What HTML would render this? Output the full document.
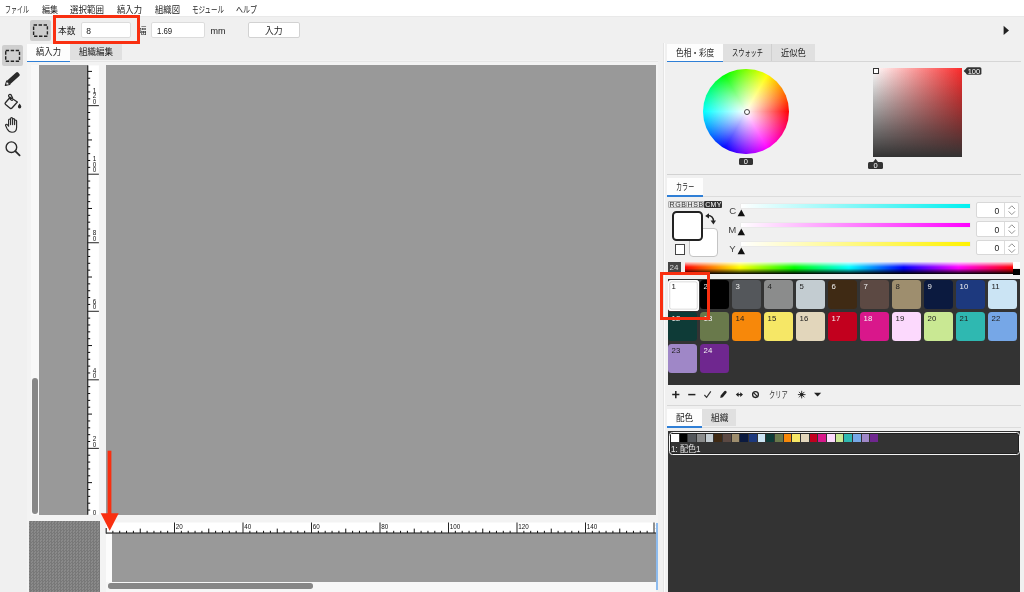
<!DOCTYPE html>
<html lang="ja"><head><meta charset="utf-8"><title>縞入力</title>
<style>
*{box-sizing:border-box;margin:0;padding:0}
html,body{width:1024px;height:592px;overflow:hidden}
body{position:relative;background:#f0f0f0;will-change:transform;font-family:"Liberation Sans","Noto Sans CJK JP",sans-serif;font-size:9px;color:#222;line-height:1}
.a{position:absolute}
.t{position:absolute;white-space:nowrap;line-height:1}
.menu{position:absolute;left:0;top:0;width:1024px;height:16px;background:#fff}
.menu .t{top:4.6px;font-size:8.6px;color:#1e1e1e}
.kana{letter-spacing:-2.5px}
.tab{position:absolute;font-size:8.6px;text-align:center;color:#222}
.tab.on{background:#fdfdfd}
.tab.off{background:#e0e0e0}
.inp{position:absolute;background:#fff;border:1px solid #dcdcdc;border-radius:2px}
.badge{position:absolute;background:#333;color:#fff;border-radius:1.5px;font-size:7.5px;text-align:center}
.sw{position:absolute;width:29.1px;height:29.1px;border-radius:3.5px}
.sw span{position:absolute;left:3.4px;top:2.6px;font-size:7.8px;line-height:1}
.ms{position:absolute;top:434.4px;width:7.7px;height:7.8px}
.hl{position:absolute;height:1px;background:#d6d6d6}
</style></head><body>

<div class="menu">
<span class="t" style="left:5px;top:5.5px;font-size:9px;transform-origin:0 0;transform:scaleX(0.666);color:#1e1e1e;">ファイル</span>
<span class="t" style="left:42px;top:5.5px;font-size:9px;transform-origin:0 0;transform:scaleX(0.888);color:#1e1e1e;">編集</span>
<span class="t" style="left:70px;top:5.5px;font-size:9px;transform-origin:0 0;transform:scaleX(0.944);color:#1e1e1e;">選択範囲</span>
<span class="t" style="left:117px;top:5.5px;font-size:9px;transform-origin:0 0;transform:scaleX(0.925);color:#1e1e1e;">縞入力</span>
<span class="t" style="left:155px;top:5.5px;font-size:9px;transform-origin:0 0;transform:scaleX(0.925);color:#1e1e1e;">組織図</span>
<span class="t" style="left:192px;top:5.5px;font-size:9px;transform-origin:0 0;transform:scaleX(0.721);color:#1e1e1e;">モジュール</span>
<span class="t" style="left:236px;top:5.5px;font-size:9px;transform-origin:0 0;transform:scaleX(0.777);color:#1e1e1e;">ヘルプ</span>
</div>
<div class="a" style="left:0;top:16px;width:1024px;height:1px;background:#e9e9e9"></div>
<div class="a" style="left:30px;top:20px;width:20.6px;height:20.6px;background:#cdcdcd;border-radius:2px"></div>
<svg class="a" style="left:30px;top:20px" width="21" height="21" viewBox="0 0 21 21"><rect x="3.6" y="5" width="13.8" height="11.2" fill="none" stroke="#222" stroke-width="1.4" stroke-dasharray="3.4 1.6"/></svg>
<span class="t" style="left:58px;top:26.9px;font-size:9px;transform-origin:0 0;transform:scaleX(0.966);">本数</span>
<div class="inp" style="left:80.8px;top:22.3px;width:50px;height:15.9px"></div>
<span class="t" style="left:86.3px;top:27px;font-size:8.5px">8</span>
<span class="t" style="left:137.5px;top:27px;font-size:9px">幅</span>
<div class="inp" style="left:151px;top:22.3px;width:53.6px;height:15.9px"></div>
<span class="t" style="left:157px;top:27px;font-size:8.6px;transform-origin:0 0;transform:scaleX(0.908);">1.69</span>
<span class="t" style="left:210.6px;top:27px;font-size:9px;transform-origin:0 0;transform:scaleX(1.000);">mm</span>
<div class="inp" style="left:247.8px;top:22.3px;width:51.8px;height:15.9px;border-color:#d2d2d2"></div>
<span class="t" style="left:248px;top:27px;width:51.4px;text-align:center;font-size:8.8px">入力</span>
<svg class="a" style="left:1003px;top:25px" width="8" height="11" viewBox="0 0 8 11"><path d="M0.6 0.8 L6 5.4 L0.6 10 Z" fill="#222"/></svg>
<div class="a" style="left:53px;top:15px;width:86.5px;height:28.8px;border:3.8px solid #f92f10;z-index:5"></div>
<div class="a" style="left:1.6px;top:45px;width:21.2px;height:21px;background:#cfcfcf;border-radius:2px"></div>
<svg class="a" style="left:0;top:44px" width="27" height="120" viewBox="0 44 27 120">
<rect x="5.7" y="50.5" width="13.8" height="10.8" fill="none" stroke="#222" stroke-width="1.4" stroke-dasharray="3.4 1.6"/>
<g transform="translate(12.5 78.9) rotate(-42) scale(0.92)"><path d="M-6.2 -2.6 H7.6 a1.6 1.6 0 0 1 1.6 1.6 V1 a1.6 1.6 0 0 1 -1.6 1.6 H-6.2 Z" fill="#2a2a2a"/><path d="M-6.2 -2.6 L-10.6 0 L-6.2 2.6 Z" fill="#f0f0f0" stroke="#2a2a2a" stroke-width="1.1" stroke-linejoin="round"/><path d="M-10.6 0 L-8.9 -1 L-8.9 1 Z" fill="#2a2a2a"/></g>
<g fill="none" stroke="#2a2a2a" stroke-width="1.3" stroke-linejoin="round" stroke-linecap="round"><path d="M10.2 97.2 L17.4 102 L12 108 a1.4 1.4 0 0 1 -1.9 0.2 L5.6 104.6 a1.4 1.4 0 0 1 -0.2 -1.9 Z"/><path d="M10.6 99.6 L8.6 96 a1.4 1.4 0 0 1 2.4 -1.2 L12.6 98"/></g>
<circle cx="12" cy="100.2" r="0.9" fill="#2a2a2a"/>
<path d="M19.6 103.6 c1 1.4 1.7 2.3 1.7 3.2 a1.7 1.7 0 0 1 -3.4 0 c0 -0.9 0.7 -1.8 1.7 -3.2 Z" fill="#2a2a2a"/>
<path d="M8.6 125.5 V120 a1 1 0 0 1 2 0 V118.6 a1 1 0 0 1 2 0 V119.6 a1 1 0 0 1 2 0 V121 a1 1 0 0 1 2 0 V127.4 c0 3 -1.8 4.8 -4.6 4.8 c-2.4 0 -3.6 -1 -4.8 -3.2 L5.6 125.6 a1 1 0 0 1 1.6 -1.1 L8.6 126.2 M10.6 120 V124.6 M12.6 119 V124.6 M14.6 120 V124.6" fill="none" stroke="#2a2a2a" stroke-width="1.15" stroke-linejoin="round" stroke-linecap="round"/>
<circle cx="11.4" cy="147.2" r="5.3" fill="none" stroke="#2a2a2a" stroke-width="1.4"/><path d="M15.3 151.2 L19.6 155.4" stroke="#2a2a2a" stroke-width="1.8" stroke-linecap="round"/>
</svg>
<div class="a" style="left:26.5px;top:44.3px;width:632px;height:548px;background:#f3f3f3"></div>
<div class="tab on" style="left:26.5px;top:44.3px;width:43.5px;height:16.4px"></div>
<span class="t" style="left:35.7px;top:48.3px;font-size:9px;transform-origin:0 0;transform:scaleX(0.925);">縞入力</span>
<div class="tab off" style="left:70px;top:44.3px;width:51.5px;height:16.2px"></div>
<span class="t" style="left:79.2px;top:48.3px;font-size:9px;transform-origin:0 0;transform:scaleX(0.944);">組織編集</span>
<div class="a" style="left:121.5px;top:44.3px;width:537px;height:16.2px;background:#f0f0f0"></div>
<div class="a" style="left:70px;top:60.5px;width:588px;height:1px;background:#e6e6e6"></div>
<div class="a" style="left:26.5px;top:60.5px;width:43.5px;height:1.8px;background:#2f7fd6"></div>
<div class="a" style="left:30.5px;top:65.4px;width:8.6px;height:449.3px;background:#f8f8f8"></div>
<div class="a" style="left:32px;top:377.5px;width:6px;height:136px;background:#878787;border-radius:3px"></div>
<div class="a" style="left:39px;top:65.4px;width:48.6px;height:449.3px;background:#999"></div>
<svg class="a" style="left:87px;top:65px" width="13" height="450" viewBox="87 65 13 450"><rect x="87.6" y="65.4" width="11.3" height="449.3" fill="#fff"/><rect x="87.2" y="65.4" width="1.1" height="449.3" fill="#111"/><rect x="88" y="509.55" width="2.2" height="1" fill="#111"/><rect x="88" y="502.69" width="2.2" height="1" fill="#111"/><rect x="88" y="495.84" width="2.2" height="1" fill="#111"/><rect x="88" y="488.98" width="2.2" height="1" fill="#111"/><rect x="88" y="482.13" width="4" height="1" fill="#111"/><rect x="88" y="475.28" width="2.2" height="1" fill="#111"/><rect x="88" y="468.42" width="2.2" height="1" fill="#111"/><rect x="88" y="461.57" width="2.2" height="1" fill="#111"/><rect x="88" y="454.71" width="2.2" height="1" fill="#111"/><rect x="87.6" y="447.86" width="11.3" height="1" fill="#222"/><rect x="88" y="441.01" width="2.2" height="1" fill="#111"/><rect x="88" y="434.15" width="2.2" height="1" fill="#111"/><rect x="88" y="427.30" width="2.2" height="1" fill="#111"/><rect x="88" y="420.44" width="2.2" height="1" fill="#111"/><rect x="88" y="413.59" width="4" height="1" fill="#111"/><rect x="88" y="406.74" width="2.2" height="1" fill="#111"/><rect x="88" y="399.88" width="2.2" height="1" fill="#111"/><rect x="88" y="393.03" width="2.2" height="1" fill="#111"/><rect x="88" y="386.17" width="2.2" height="1" fill="#111"/><rect x="87.6" y="379.32" width="11.3" height="1" fill="#222"/><rect x="88" y="372.47" width="2.2" height="1" fill="#111"/><rect x="88" y="365.61" width="2.2" height="1" fill="#111"/><rect x="88" y="358.76" width="2.2" height="1" fill="#111"/><rect x="88" y="351.90" width="2.2" height="1" fill="#111"/><rect x="88" y="345.05" width="4" height="1" fill="#111"/><rect x="88" y="338.20" width="2.2" height="1" fill="#111"/><rect x="88" y="331.34" width="2.2" height="1" fill="#111"/><rect x="88" y="324.49" width="2.2" height="1" fill="#111"/><rect x="88" y="317.63" width="2.2" height="1" fill="#111"/><rect x="87.6" y="310.78" width="11.3" height="1" fill="#222"/><rect x="88" y="303.93" width="2.2" height="1" fill="#111"/><rect x="88" y="297.07" width="2.2" height="1" fill="#111"/><rect x="88" y="290.22" width="2.2" height="1" fill="#111"/><rect x="88" y="283.36" width="2.2" height="1" fill="#111"/><rect x="88" y="276.51" width="4" height="1" fill="#111"/><rect x="88" y="269.66" width="2.2" height="1" fill="#111"/><rect x="88" y="262.80" width="2.2" height="1" fill="#111"/><rect x="88" y="255.95" width="2.2" height="1" fill="#111"/><rect x="88" y="249.09" width="2.2" height="1" fill="#111"/><rect x="87.6" y="242.24" width="11.3" height="1" fill="#222"/><rect x="88" y="235.39" width="2.2" height="1" fill="#111"/><rect x="88" y="228.53" width="2.2" height="1" fill="#111"/><rect x="88" y="221.68" width="2.2" height="1" fill="#111"/><rect x="88" y="214.82" width="2.2" height="1" fill="#111"/><rect x="88" y="207.97" width="4" height="1" fill="#111"/><rect x="88" y="201.12" width="2.2" height="1" fill="#111"/><rect x="88" y="194.26" width="2.2" height="1" fill="#111"/><rect x="88" y="187.41" width="2.2" height="1" fill="#111"/><rect x="88" y="180.55" width="2.2" height="1" fill="#111"/><rect x="87.6" y="173.70" width="11.3" height="1" fill="#222"/><rect x="88" y="166.85" width="2.2" height="1" fill="#111"/><rect x="88" y="159.99" width="2.2" height="1" fill="#111"/><rect x="88" y="153.14" width="2.2" height="1" fill="#111"/><rect x="88" y="146.28" width="2.2" height="1" fill="#111"/><rect x="88" y="139.43" width="4" height="1" fill="#111"/><rect x="88" y="132.58" width="2.2" height="1" fill="#111"/><rect x="88" y="125.72" width="2.2" height="1" fill="#111"/><rect x="88" y="118.87" width="2.2" height="1" fill="#111"/><rect x="88" y="112.01" width="2.2" height="1" fill="#111"/><rect x="87.6" y="105.16" width="11.3" height="1" fill="#222"/><rect x="88" y="98.31" width="2.2" height="1" fill="#111"/><rect x="88" y="91.45" width="2.2" height="1" fill="#111"/><rect x="88" y="84.60" width="2.2" height="1" fill="#111"/><rect x="88" y="77.74" width="2.2" height="1" fill="#111"/><rect x="88" y="70.89" width="4" height="1" fill="#111"/><text x="94.6" y="515.10" font-size="6.3" text-anchor="middle" fill="#111" font-family='Liberation Sans',sans-serif>0</text><text x="94.6" y="441.06" font-size="6.3" text-anchor="middle" fill="#111" font-family='Liberation Sans',sans-serif>2</text><text x="94.6" y="446.56" font-size="6.3" text-anchor="middle" fill="#111" font-family='Liberation Sans',sans-serif>0</text><text x="94.6" y="372.52" font-size="6.3" text-anchor="middle" fill="#111" font-family='Liberation Sans',sans-serif>4</text><text x="94.6" y="378.02" font-size="6.3" text-anchor="middle" fill="#111" font-family='Liberation Sans',sans-serif>0</text><text x="94.6" y="303.98" font-size="6.3" text-anchor="middle" fill="#111" font-family='Liberation Sans',sans-serif>6</text><text x="94.6" y="309.48" font-size="6.3" text-anchor="middle" fill="#111" font-family='Liberation Sans',sans-serif>0</text><text x="94.6" y="235.44" font-size="6.3" text-anchor="middle" fill="#111" font-family='Liberation Sans',sans-serif>8</text><text x="94.6" y="240.94" font-size="6.3" text-anchor="middle" fill="#111" font-family='Liberation Sans',sans-serif>0</text><text x="94.6" y="161.40" font-size="6.3" text-anchor="middle" fill="#111" font-family='Liberation Sans',sans-serif>1</text><text x="94.6" y="166.90" font-size="6.3" text-anchor="middle" fill="#111" font-family='Liberation Sans',sans-serif>0</text><text x="94.6" y="172.40" font-size="6.3" text-anchor="middle" fill="#111" font-family='Liberation Sans',sans-serif>0</text><text x="94.6" y="92.86" font-size="6.3" text-anchor="middle" fill="#111" font-family='Liberation Sans',sans-serif>1</text><text x="94.6" y="98.36" font-size="6.3" text-anchor="middle" fill="#111" font-family='Liberation Sans',sans-serif>2</text><text x="94.6" y="103.86" font-size="6.3" text-anchor="middle" fill="#111" font-family='Liberation Sans',sans-serif>0</text></svg>
<div class="a" style="left:105.5px;top:65.4px;width:550.6px;height:449.3px;background:#999"></div>
<div class="a" style="left:28.6px;top:521px;width:71.4px;height:71px;background:#808080;background-image:repeating-conic-gradient(#787878 0 25%,#8a8a8a 0 50%);background-size:3px 3px"></div>
<div class="a" style="left:106px;top:533.4px;width:6.3px;height:48.2px;background:#fcfcfc"></div>
<div class="a" style="left:112.3px;top:533.4px;width:543.8px;height:48.2px;background:#999"></div>
<div class="a" style="left:106px;top:581.6px;width:550px;height:10.4px;background:#f7f7f7"></div>
<div class="a" style="left:107.5px;top:583.4px;width:205px;height:5.4px;background:#878787;border-radius:2.7px"></div>
<svg class="a" style="left:105px;top:522px" width="552" height="12" viewBox="105 522 552 12"><rect x="106" y="522.5" width="550.1" height="11" fill="#fff"/><rect x="106" y="532.5" width="550.1" height="1.1" fill="#111"/><rect x="105.6" y="528" width="1.2" height="5.5" fill="#333"/><rect x="112.35" y="530.8" width="1" height="2.2" fill="#111"/><rect x="119.20" y="530.8" width="1" height="2.2" fill="#111"/><rect x="126.05" y="530.8" width="1" height="2.2" fill="#111"/><rect x="132.90" y="530.8" width="1" height="2.2" fill="#111"/><rect x="139.75" y="528.6" width="1" height="4.4" fill="#111"/><rect x="146.60" y="530.8" width="1" height="2.2" fill="#111"/><rect x="153.45" y="530.8" width="1" height="2.2" fill="#111"/><rect x="160.30" y="530.8" width="1" height="2.2" fill="#111"/><rect x="167.15" y="530.8" width="1" height="2.2" fill="#111"/><rect x="174.00" y="522.5" width="1" height="10.5" fill="#222"/><rect x="180.85" y="530.8" width="1" height="2.2" fill="#111"/><rect x="187.70" y="530.8" width="1" height="2.2" fill="#111"/><rect x="194.55" y="530.8" width="1" height="2.2" fill="#111"/><rect x="201.40" y="530.8" width="1" height="2.2" fill="#111"/><rect x="208.25" y="528.6" width="1" height="4.4" fill="#111"/><rect x="215.10" y="530.8" width="1" height="2.2" fill="#111"/><rect x="221.95" y="530.8" width="1" height="2.2" fill="#111"/><rect x="228.80" y="530.8" width="1" height="2.2" fill="#111"/><rect x="235.65" y="530.8" width="1" height="2.2" fill="#111"/><rect x="242.50" y="522.5" width="1" height="10.5" fill="#222"/><rect x="249.35" y="530.8" width="1" height="2.2" fill="#111"/><rect x="256.20" y="530.8" width="1" height="2.2" fill="#111"/><rect x="263.05" y="530.8" width="1" height="2.2" fill="#111"/><rect x="269.90" y="530.8" width="1" height="2.2" fill="#111"/><rect x="276.75" y="528.6" width="1" height="4.4" fill="#111"/><rect x="283.60" y="530.8" width="1" height="2.2" fill="#111"/><rect x="290.45" y="530.8" width="1" height="2.2" fill="#111"/><rect x="297.30" y="530.8" width="1" height="2.2" fill="#111"/><rect x="304.15" y="530.8" width="1" height="2.2" fill="#111"/><rect x="311.00" y="522.5" width="1" height="10.5" fill="#222"/><rect x="317.85" y="530.8" width="1" height="2.2" fill="#111"/><rect x="324.70" y="530.8" width="1" height="2.2" fill="#111"/><rect x="331.55" y="530.8" width="1" height="2.2" fill="#111"/><rect x="338.40" y="530.8" width="1" height="2.2" fill="#111"/><rect x="345.25" y="528.6" width="1" height="4.4" fill="#111"/><rect x="352.10" y="530.8" width="1" height="2.2" fill="#111"/><rect x="358.95" y="530.8" width="1" height="2.2" fill="#111"/><rect x="365.80" y="530.8" width="1" height="2.2" fill="#111"/><rect x="372.65" y="530.8" width="1" height="2.2" fill="#111"/><rect x="379.50" y="522.5" width="1" height="10.5" fill="#222"/><rect x="386.35" y="530.8" width="1" height="2.2" fill="#111"/><rect x="393.20" y="530.8" width="1" height="2.2" fill="#111"/><rect x="400.05" y="530.8" width="1" height="2.2" fill="#111"/><rect x="406.90" y="530.8" width="1" height="2.2" fill="#111"/><rect x="413.75" y="528.6" width="1" height="4.4" fill="#111"/><rect x="420.60" y="530.8" width="1" height="2.2" fill="#111"/><rect x="427.45" y="530.8" width="1" height="2.2" fill="#111"/><rect x="434.30" y="530.8" width="1" height="2.2" fill="#111"/><rect x="441.15" y="530.8" width="1" height="2.2" fill="#111"/><rect x="448.00" y="522.5" width="1" height="10.5" fill="#222"/><rect x="454.85" y="530.8" width="1" height="2.2" fill="#111"/><rect x="461.70" y="530.8" width="1" height="2.2" fill="#111"/><rect x="468.55" y="530.8" width="1" height="2.2" fill="#111"/><rect x="475.40" y="530.8" width="1" height="2.2" fill="#111"/><rect x="482.25" y="528.6" width="1" height="4.4" fill="#111"/><rect x="489.10" y="530.8" width="1" height="2.2" fill="#111"/><rect x="495.95" y="530.8" width="1" height="2.2" fill="#111"/><rect x="502.80" y="530.8" width="1" height="2.2" fill="#111"/><rect x="509.65" y="530.8" width="1" height="2.2" fill="#111"/><rect x="516.50" y="522.5" width="1" height="10.5" fill="#222"/><rect x="523.35" y="530.8" width="1" height="2.2" fill="#111"/><rect x="530.20" y="530.8" width="1" height="2.2" fill="#111"/><rect x="537.05" y="530.8" width="1" height="2.2" fill="#111"/><rect x="543.90" y="530.8" width="1" height="2.2" fill="#111"/><rect x="550.75" y="528.6" width="1" height="4.4" fill="#111"/><rect x="557.60" y="530.8" width="1" height="2.2" fill="#111"/><rect x="564.45" y="530.8" width="1" height="2.2" fill="#111"/><rect x="571.30" y="530.8" width="1" height="2.2" fill="#111"/><rect x="578.15" y="530.8" width="1" height="2.2" fill="#111"/><rect x="585.00" y="522.5" width="1" height="10.5" fill="#222"/><rect x="591.85" y="530.8" width="1" height="2.2" fill="#111"/><rect x="598.70" y="530.8" width="1" height="2.2" fill="#111"/><rect x="605.55" y="530.8" width="1" height="2.2" fill="#111"/><rect x="612.40" y="530.8" width="1" height="2.2" fill="#111"/><rect x="619.25" y="528.6" width="1" height="4.4" fill="#111"/><rect x="626.10" y="530.8" width="1" height="2.2" fill="#111"/><rect x="632.95" y="530.8" width="1" height="2.2" fill="#111"/><rect x="639.80" y="530.8" width="1" height="2.2" fill="#111"/><rect x="646.65" y="530.8" width="1" height="2.2" fill="#111"/><rect x="653.50" y="522.5" width="1" height="10.5" fill="#222"/><text x="175.70" y="528.6" font-size="6.3" fill="#111" font-family='Liberation Sans',sans-serif>20</text><text x="244.20" y="528.6" font-size="6.3" fill="#111" font-family='Liberation Sans',sans-serif>40</text><text x="312.70" y="528.6" font-size="6.3" fill="#111" font-family='Liberation Sans',sans-serif>60</text><text x="381.20" y="528.6" font-size="6.3" fill="#111" font-family='Liberation Sans',sans-serif>80</text><text x="449.70" y="528.6" font-size="6.3" fill="#111" font-family='Liberation Sans',sans-serif>100</text><text x="518.20" y="528.6" font-size="6.3" fill="#111" font-family='Liberation Sans',sans-serif>120</text><text x="586.70" y="528.6" font-size="6.3" fill="#111" font-family='Liberation Sans',sans-serif>140</text><text x="655.3" y="528.6" font-size="6.3" fill="#111" font-family='Liberation Sans',sans-serif>1</text></svg>
<div class="a" style="left:656.4px;top:522.5px;width:1.5px;height:67.5px;background:#8dbbee"></div>
<svg class="a" style="left:98px;top:448px;z-index:6" width="24" height="86" viewBox="98 448 24 86"><rect x="107.6" y="450.7" width="3.8" height="64" fill="#f92f10"/><path d="M100.7 513.3 H118.7 L109.7 530.8 Z" fill="#f92f10"/></svg>
<div class="a" style="left:658px;top:42px;width:366px;height:550px;background:#f0f0f0"></div>
<div class="a" style="left:662.6px;top:42.5px;width:1px;height:550px;background:#e4e4e4"></div>
<div class="a" style="left:663.6px;top:42.5px;width:1px;height:550px;background:#fbfbfb"></div>
<div class="hl" style="left:667px;top:60.8px;width:354px"></div>
<div class="tab on" style="left:666.6px;top:43.6px;width:56.6px;height:17.2px"></div>
<div class="tab off" style="left:723.2px;top:43.6px;width:48px;height:17.2px"></div>
<div class="tab off" style="left:771.6px;top:43.6px;width:43.8px;height:17.2px"></div>
<div class="a" style="left:771.2px;top:43.6px;width:0.8px;height:17.2px;background:#cfcfcf"></div>
<span class="t" style="left:676px;top:48.6px;font-size:9px;transform-origin:0 0;transform:scaleX(0.849);">色相・彩度</span>
<span class="t" style="left:732px;top:48.6px;font-size:9px;transform-origin:0 0;transform:scaleX(0.689);">スウォッチ</span>
<span class="t" style="left:781px;top:48.6px;font-size:9px;transform-origin:0 0;transform:scaleX(0.918);">近似色</span>
<div class="a" style="left:666.6px;top:60.6px;width:56.6px;height:1.6px;background:#2f7fd6"></div>
<div class="a" style="left:703.4px;top:68.7px;width:85.8px;height:85.8px;border-radius:50%;background:radial-gradient(closest-side,#fff 0%,rgba(255,255,255,0) 100%),conic-gradient(from 0deg,hsl(90,100%,50%),hsl(60,100%,50%) 30deg,hsl(30,100%,50%) 60deg,hsl(0,100%,50%) 90deg,hsl(330,100%,50%) 120deg,hsl(300,100%,50%) 150deg,hsl(270,100%,50%) 180deg,hsl(240,100%,50%) 210deg,hsl(210,100%,50%) 240deg,hsl(180,100%,50%) 270deg,hsl(150,100%,50%) 300deg,hsl(120,100%,50%) 330deg,hsl(90,100%,50%) 360deg)"></div>
<div class="a" style="left:743.6px;top:108.6px;width:6.4px;height:6.4px;border-radius:50%;background:#fff;border:1.1px solid #444"></div>
<div class="badge" style="left:738.8px;top:158px;width:14.2px;height:6.8px;line-height:7px">0</div>
<div class="a" style="left:872.8px;top:67.8px;width:89.7px;height:89.7px;background:linear-gradient(to bottom,rgba(51,51,51,0) 0%,rgba(51,51,51,1) 100%),linear-gradient(to right,#fff 0%,#fb2a2a 100%)"></div>
<div class="a" style="left:872.6px;top:67.9px;width:6.3px;height:6.3px;background:#fff;border:1.2px solid #333"></div>
<svg class="a" style="left:962.6px;top:67px" width="20" height="9" viewBox="0 0 20 9"><path d="M0.6 4 L4 0.8 V7.2 Z" fill="#333"/><rect x="3.4" y="0.3" width="15" height="7.4" rx="1.5" fill="#333"/><text x="10.9" y="6.6" font-size="7.5" fill="#fff" text-anchor="middle" font-family="Liberation Sans,sans-serif">100</text></svg>
<svg class="a" style="left:867px;top:158px" width="18" height="12" viewBox="0 0 18 12"><path d="M8.6 0.8 L11.4 4.6 H5.8 Z" fill="#333"/><rect x="1" y="4" width="15" height="6.9" rx="1.5" fill="#333"/><text x="8.5" y="10.3" font-size="7.5" fill="#fff" text-anchor="middle" font-family="Liberation Sans,sans-serif">0</text></svg>
<div class="hl" style="left:667px;top:174px;width:354px;background:#d2d2d2"></div>
<div class="tab on" style="left:666.8px;top:177.5px;width:35.8px;height:17.6px"></div>
<span class="t" style="left:675.6px;top:182.9px;font-size:9px;transform-origin:0 0;transform:scaleX(0.674);">カラー</span>
<div class="hl" style="left:702px;top:196px;width:319px;background:#dcdcdc"></div>
<div class="a" style="left:666.8px;top:195px;width:35.8px;height:1.9px;background:#2f7fd6"></div>
<div class="a" style="left:668px;top:200.6px;width:18.6px;height:7.4px;background:#e6e6e6;border:0.8px solid #adadad;border-radius:1px"></div>
<div class="a" style="left:686.4px;top:200.6px;width:17.8px;height:7.4px;background:#e6e6e6;border:0.8px solid #adadad;border-radius:1px"></div>
<div class="a" style="left:704px;top:200.6px;width:18.2px;height:7.4px;background:#333;border-radius:1px"></div>
<span class="t" style="left:669.6px;top:201.2px;font-size:7px;letter-spacing:0.55px;color:#333">RGB</span>
<span class="t" style="left:687.6px;top:201.2px;font-size:7px;letter-spacing:0.55px;color:#333">HSB</span>
<span class="t" style="left:705.2px;top:201.2px;font-size:7px;letter-spacing:0.3px;color:#fff">CMY</span>
<div class="a" style="left:688.6px;top:227.6px;width:29.6px;height:29.6px;background:#fff;border:1px solid #c4c4c4;border-radius:4px"></div>
<div class="a" style="left:672px;top:211.2px;width:30.6px;height:30.3px;background:#fff;border:2.1px solid #222;border-radius:4.5px"></div>
<div class="a" style="left:675px;top:244.4px;width:10.2px;height:10.2px;background:#fff;border:1px solid #444"></div>
<svg class="a" style="left:704px;top:212px" width="13" height="14" viewBox="0 0 13 14"><path d="M3.6 3.6 C7.4 3.4 9.6 5.6 9.4 9.4" fill="none" stroke="#222" stroke-width="1.5"/><path d="M1.2 4 L5 1.2 L5 6.6 Z" fill="#222"/><path d="M6.6 8.6 L12 8.6 L9.4 12.4 Z" fill="#222"/></svg>
<div class="a" style="left:741px;top:204.3px;width:228.6px;height:3.7px;background:linear-gradient(to right,#fff 0%,#00f0f0 100%);box-shadow:0 0 0 0.5px #e4e4e4"></div>
<svg class="a" style="left:737px;top:208.7px" width="9" height="8" viewBox="0 0 9 8"><path d="M4.3 0.6 L8 7.2 H0.6 Z" fill="#111"/></svg>
<span class="t" style="left:729.2px;top:206.3px;font-size:9.6px;color:#444">C</span>
<div class="inp" style="left:975.8px;top:202.4px;width:43.6px;height:15.3px;border-color:#d8d8d8"></div>
<div class="a" style="left:1004px;top:203.2px;width:0.8px;height:13.6px;background:#dcdcdc"></div>
<span class="t" style="left:994.4px;top:206.7px;font-size:8.6px;color:#222">0</span>
<svg class="a" style="left:1007px;top:204.0px" width="10" height="12" viewBox="0 0 10 12"><path d="M1.6 5 L4.8 1.8 L8 5 M1.6 7.4 L4.8 10.6 L8 7.4" fill="none" stroke="#808080" stroke-width="0.85"/></svg>
<div class="a" style="left:741px;top:223.3px;width:228.6px;height:3.7px;background:linear-gradient(to right,#fff 0%,#ff00ff 100%);box-shadow:0 0 0 0.5px #e4e4e4"></div>
<svg class="a" style="left:737px;top:227.7px" width="9" height="8" viewBox="0 0 9 8"><path d="M4.3 0.6 L8 7.2 H0.6 Z" fill="#111"/></svg>
<span class="t" style="left:728.2px;top:225.3px;font-size:9.6px;color:#444">M</span>
<div class="inp" style="left:975.8px;top:221.3px;width:43.6px;height:15.3px;border-color:#d8d8d8"></div>
<div class="a" style="left:1004px;top:222.1px;width:0.8px;height:13.6px;background:#dcdcdc"></div>
<span class="t" style="left:994.4px;top:225.6px;font-size:8.6px;color:#222">0</span>
<svg class="a" style="left:1007px;top:222.9px" width="10" height="12" viewBox="0 0 10 12"><path d="M1.6 5 L4.8 1.8 L8 5 M1.6 7.4 L4.8 10.6 L8 7.4" fill="none" stroke="#808080" stroke-width="0.85"/></svg>
<div class="a" style="left:741px;top:242.3px;width:228.6px;height:3.7px;background:linear-gradient(to right,#fff 0%,#fff200 100%);box-shadow:0 0 0 0.5px #e4e4e4"></div>
<svg class="a" style="left:737px;top:246.7px" width="9" height="8" viewBox="0 0 9 8"><path d="M4.3 0.6 L8 7.2 H0.6 Z" fill="#111"/></svg>
<span class="t" style="left:729.2px;top:244.3px;font-size:9.6px;color:#444">Y</span>
<div class="inp" style="left:975.8px;top:239.9px;width:43.6px;height:15.3px;border-color:#d8d8d8"></div>
<div class="a" style="left:1004px;top:240.7px;width:0.8px;height:13.6px;background:#dcdcdc"></div>
<span class="t" style="left:994.4px;top:244.2px;font-size:8.6px;color:#222">0</span>
<svg class="a" style="left:1007px;top:241.5px" width="10" height="12" viewBox="0 0 10 12"><path d="M1.6 5 L4.8 1.8 L8 5 M1.6 7.4 L4.8 10.6 L8 7.4" fill="none" stroke="#808080" stroke-width="0.85"/></svg>
<div class="a" style="left:667.8px;top:262.2px;width:12.9px;height:10.4px;background:#444"></div>
<span class="t" style="left:669.6px;top:264.2px;font-size:8px;color:#d8d8d8">24</span>
<div class="a" style="left:685px;top:262.2px;width:327.6px;height:12.3px;background:linear-gradient(to bottom,rgba(255,255,255,0.85) 0%,rgba(255,255,255,0) 42%,rgba(0,0,0,0) 52%,#000 100%),linear-gradient(to right,#f00 0%,#ff0 16.67%,#0f0 33.33%,#0ff 50%,#00f 66.67%,#f0f 83.33%,#f00 100%)"></div>
<div class="a" style="left:1012.6px;top:262.2px;width:7.8px;height:6.3px;background:#fff"></div>
<div class="a" style="left:1012.6px;top:268.5px;width:7.8px;height:6px;background:#000"></div>
<div class="a" style="left:667.6px;top:279px;width:352.8px;height:106.2px;background:#333"></div>
<div class="sw" style="left:668.0px;top:280.2px;background:#ffffff;color:#222;box-shadow:inset 0 0 0 1.4px #fff,inset 0 0 0 2.2px #d0d0d0;width:30.6px;height:30.4px"><span>1</span></div>
<div class="sw" style="left:700.2px;top:280.4px;background:#000000;color:#f2f2f2"><span>2</span></div>
<div class="sw" style="left:732.2px;top:280.4px;background:#54575b;color:#f2f2f2"><span>3</span></div>
<div class="sw" style="left:764.2px;top:280.4px;background:#8b8c8c;color:#222"><span>4</span></div>
<div class="sw" style="left:796.2px;top:280.4px;background:#c3ccd1;color:#222"><span>5</span></div>
<div class="sw" style="left:828.2px;top:280.4px;background:#3f2a14;color:#f2f2f2"><span>6</span></div>
<div class="sw" style="left:860.2px;top:280.4px;background:#5c4943;color:#f2f2f2"><span>7</span></div>
<div class="sw" style="left:892.2px;top:280.4px;background:#9e8e6e;color:#222"><span>8</span></div>
<div class="sw" style="left:924.2px;top:280.4px;background:#0b1a3f;color:#f2f2f2"><span>9</span></div>
<div class="sw" style="left:956.2px;top:280.4px;background:#1d397e;color:#f2f2f2"><span>10</span></div>
<div class="sw" style="left:988.2px;top:280.4px;background:#cbe4f4;color:#222"><span>11</span></div>
<div class="sw" style="left:668.2px;top:312.3px;background:#0e3b37;color:#f2f2f2"><span>12</span></div>
<div class="sw" style="left:700.2px;top:312.3px;background:#69794b;color:#f2f2f2"><span>13</span></div>
<div class="sw" style="left:732.2px;top:312.3px;background:#f7880a;color:#222"><span>14</span></div>
<div class="sw" style="left:764.2px;top:312.3px;background:#f6e766;color:#222"><span>15</span></div>
<div class="sw" style="left:796.2px;top:312.3px;background:#e2d6bb;color:#222"><span>16</span></div>
<div class="sw" style="left:828.2px;top:312.3px;background:#c2001e;color:#f2f2f2"><span>17</span></div>
<div class="sw" style="left:860.2px;top:312.3px;background:#d9178b;color:#f2f2f2"><span>18</span></div>
<div class="sw" style="left:892.2px;top:312.3px;background:#fcd9fd;color:#222"><span>19</span></div>
<div class="sw" style="left:924.2px;top:312.3px;background:#c9e893;color:#222"><span>20</span></div>
<div class="sw" style="left:956.2px;top:312.3px;background:#2fb8b1;color:#222"><span>21</span></div>
<div class="sw" style="left:988.2px;top:312.3px;background:#76a7e7;color:#222"><span>22</span></div>
<div class="sw" style="left:668.2px;top:344.3px;background:#9f87c7;color:#222"><span>23</span></div>
<div class="sw" style="left:700.2px;top:344.3px;background:#6f278f;color:#f2f2f2"><span>24</span></div>
<div class="a" style="left:660px;top:271.6px;width:50px;height:48.2px;border:3.8px solid #f92f10;z-index:5"></div>
<svg class="a" style="left:668px;top:388px" width="160" height="14" viewBox="668 388 160 14"><path d="M672.2 394.6 H679.4 M675.8 391 V398.2" stroke="#222" stroke-width="1.5" fill="none"/><path d="M688.2 394.6 H695.4" stroke="#222" stroke-width="1.5" fill="none"/><path d="M704.4 395 L706.6 397.4 L710.8 391.4" stroke="#333" stroke-width="1.15" fill="none"/><g transform="translate(723.4 394.4) rotate(-50)"><path d="M-2.6 -1.4 H3 a1.2 1.2 0 0 1 1.2 1.2 V0.2 a1.2 1.2 0 0 1 -1.2 1.2 H-2.6 L-4.8 0 Z" fill="#222"/></g><path d="M737.6 394.6 H741.4" stroke="#222" stroke-width="1.3" fill="none"/><path d="M735.8 394.6 L738.6 392.2 V397 Z M743 394.6 L740.2 392.2 V397 Z" fill="#222"/><circle cx="755.5" cy="394.6" r="2.9" fill="none" stroke="#222" stroke-width="1.3"/><path d="M753.5 392.6 L757.5 396.6" stroke="#222" stroke-width="1.3"/><g stroke="#222" stroke-width="0.9"><path d="M801.7 390.8 V398.4 M797.9 394.6 H805.5 M799 391.9 L804.4 397.3 M804.4 391.9 L799 397.3"/></g><circle cx="801.7" cy="394.6" r="1.7" fill="#222"/><path d="M814 392.8 H821.2 L817.6 396.6 Z" fill="#222"/></svg>
<span class="t" style="left:769.4px;top:390.6px;font-size:9px;transform-origin:0 0;transform:scaleX(0.688);color:#333;">クリア</span>
<div class="hl" style="left:667px;top:404.6px;width:354px;background:#d8d8d8"></div>
<div class="tab on" style="left:667px;top:408.6px;width:34.6px;height:17.6px"></div>
<div class="tab off" style="left:701.6px;top:408.6px;width:34.4px;height:17.6px"></div>
<span class="t" style="left:675.6px;top:414.3px;font-size:9px;transform-origin:0 0;transform:scaleX(0.955);">配色</span>
<span class="t" style="left:710.6px;top:414.3px;font-size:9px;transform-origin:0 0;transform:scaleX(0.966);">組織</span>
<div class="hl" style="left:701.6px;top:427px;width:319px;background:#dcdcdc"></div>
<div class="a" style="left:667px;top:426px;width:34.6px;height:1.9px;background:#2f7fd6"></div>
<div class="a" style="left:667.6px;top:431.2px;width:352.8px;height:161px;background:#333"></div>
<div class="a" style="left:668.6px;top:432.2px;width:351px;height:23px;border:1.1px solid #f4f4f4;border-radius:3.5px;box-shadow:inset 0 0 0 0.6px #111"></div>
<div class="ms" style="left:671.00px;background:#ffffff"></div>
<div class="ms" style="left:679.66px;background:#000000"></div>
<div class="ms" style="left:688.32px;background:#54575b"></div>
<div class="ms" style="left:696.98px;background:#8b8c8c"></div>
<div class="ms" style="left:705.64px;background:#c3ccd1"></div>
<div class="ms" style="left:714.30px;background:#3f2a14"></div>
<div class="ms" style="left:722.96px;background:#5c4943"></div>
<div class="ms" style="left:731.62px;background:#9e8e6e"></div>
<div class="ms" style="left:740.28px;background:#0b1a3f"></div>
<div class="ms" style="left:748.94px;background:#1d397e"></div>
<div class="ms" style="left:757.60px;background:#cbe4f4"></div>
<div class="ms" style="left:766.26px;background:#0e3b37"></div>
<div class="ms" style="left:774.92px;background:#69794b"></div>
<div class="ms" style="left:783.58px;background:#f7880a"></div>
<div class="ms" style="left:792.24px;background:#f6e766"></div>
<div class="ms" style="left:800.90px;background:#e2d6bb"></div>
<div class="ms" style="left:809.56px;background:#c2001e"></div>
<div class="ms" style="left:818.22px;background:#d9178b"></div>
<div class="ms" style="left:826.88px;background:#fcd9fd"></div>
<div class="ms" style="left:835.54px;background:#c9e893"></div>
<div class="ms" style="left:844.20px;background:#2fb8b1"></div>
<div class="ms" style="left:852.86px;background:#76a7e7"></div>
<div class="ms" style="left:861.52px;background:#9f87c7"></div>
<div class="ms" style="left:870.18px;background:#6f278f"></div>
<span class="t" style="left:671px;top:445.2px;font-size:8.6px;transform-origin:0 0;transform:scaleX(0.939);color:#e6e6e6;">1: 配色1</span>
</body></html>
